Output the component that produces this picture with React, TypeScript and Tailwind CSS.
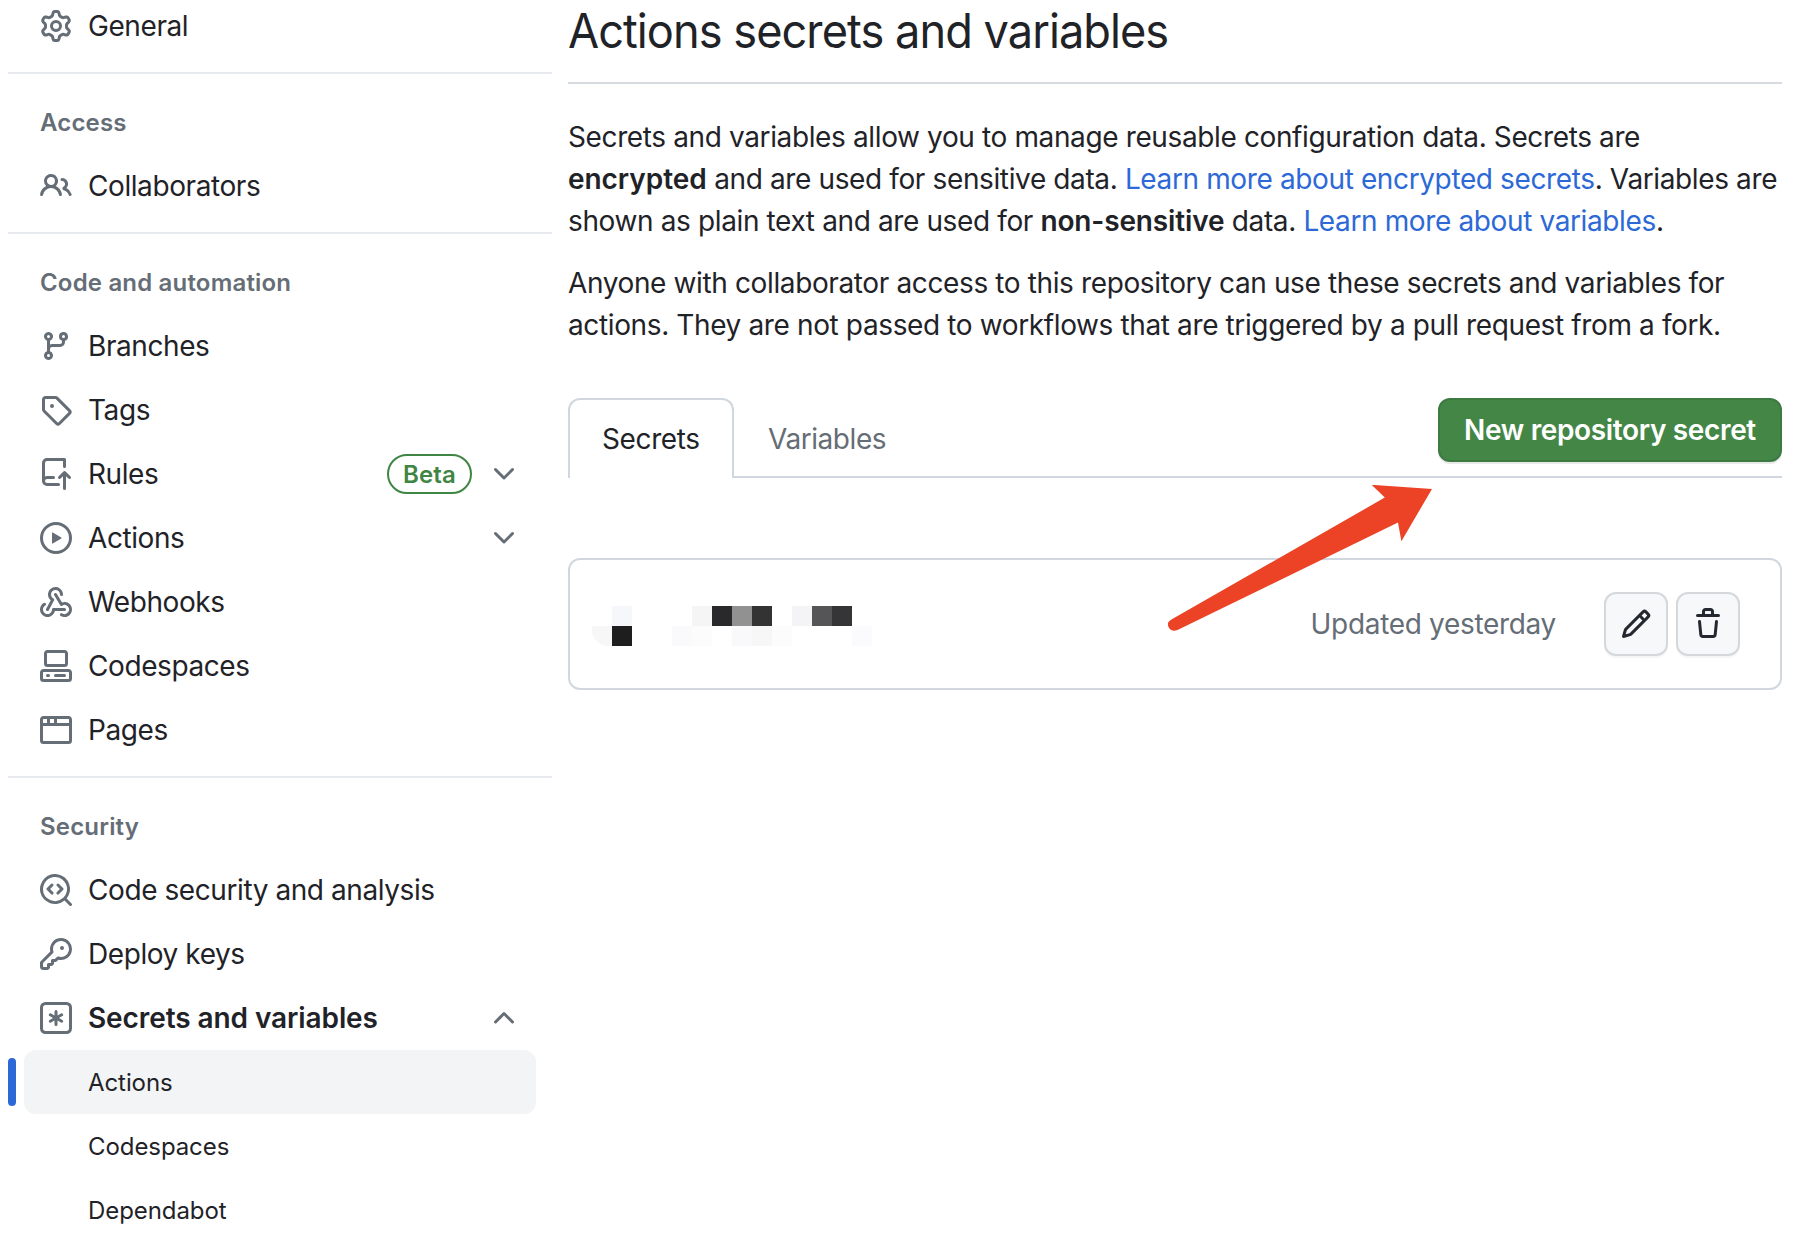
import type { ReactNode } from 'react';

const ICONS = {
  gear: 'M8 0a8.2 8.2 0 0 1 .701.031C9.444.095 9.99.645 10.16 1.29l.288 1.107c.018.066.079.158.212.224.231.114.454.243.668.386.123.082.233.09.299.071l1.103-.303c.644-.176 1.392.021 1.82.63.27.385.506.792.704 1.218.315.675.111 1.422-.364 1.891l-.814.806c-.049.048-.098.147-.088.294.016.257.016.515 0 .772-.01.147.038.246.088.294l.814.806c.475.469.679 1.216.364 1.891a7.977 7.977 0 0 1-.704 1.217c-.428.61-1.176.807-1.82.63l-1.102-.302c-.067-.019-.177-.011-.3.071a5.909 5.909 0 0 1-.668.386c-.133.066-.194.158-.211.224l-.29 1.106c-.168.646-.715 1.196-1.458 1.26a8.006 8.006 0 0 1-1.402 0c-.743-.064-1.289-.614-1.458-1.26l-.289-1.106c-.018-.066-.079-.158-.212-.224a5.738 5.738 0 0 1-.668-.386c-.123-.082-.233-.09-.299-.071l-1.103.303c-.644.176-1.392-.021-1.82-.63a8.12 8.12 0 0 1-.704-1.218c-.315-.675-.111-1.422.363-1.891l.815-.806c.05-.048.098-.147.088-.294a6.214 6.214 0 0 1 0-.772c.01-.147-.038-.246-.088-.294l-.815-.806C.635 6.045.431 5.298.746 4.623a7.92 7.92 0 0 1 .704-1.217c.428-.61 1.176-.807 1.82-.63l1.102.302c.067.019.177.011.3-.071.214-.143.437-.272.668-.386.133-.066.194-.158.211-.224l.29-1.106C6.009.645 6.556.095 7.299.03 7.53.01 7.764 0 8 0Zm-.571 1.525c-.036.003-.108.036-.137.146l-.289 1.105c-.147.561-.549.967-.998 1.189-.173.086-.34.183-.5.29-.417.278-.97.423-1.529.27l-1.103-.303c-.109-.03-.175.016-.195.045-.22.312-.412.644-.573.99-.014.031-.021.11.059.19l.815.806c.411.406.562.957.53 1.456a4.709 4.709 0 0 0 0 .582c.032.499-.119 1.05-.53 1.456l-.815.806c-.081.08-.073.159-.059.19.162.346.353.677.573.989.02.03.085.076.195.046l1.102-.303c.56-.153 1.113-.008 1.53.27.161.107.328.204.501.29.447.222.85.629.997 1.189l.289 1.105c.029.109.101.143.137.146a6.6 6.6 0 0 0 1.142 0c.036-.003.108-.036.137-.146l.289-1.105c.147-.561.549-.967.998-1.189.173-.086.34-.183.5-.29.417-.278.97-.423 1.529-.27l1.103.303c.109.029.175-.016.195-.045.22-.313.411-.644.573-.99.014-.031.021-.11-.059-.19l-.815-.806c-.411-.406-.562-.957-.53-1.456a4.709 4.709 0 0 0 0-.582c-.032-.499.119-1.05.53-1.456l.815-.806c.081-.08.073-.159.059-.19a6.464 6.464 0 0 0-.573-.989c-.02-.03-.085-.076-.195-.046l-1.102.303c-.56.153-1.113.008-1.53-.27a4.44 4.44 0 0 0-.501-.29c-.447-.222-.85-.629-.997-1.189l-.289-1.105c-.029-.11-.101-.143-.137-.146a6.6 6.6 0 0 0-1.142 0ZM11 8a3 3 0 1 1-6 0 3 3 0 0 1 6 0ZM9.5 8a1.5 1.5 0 1 0-3.001.001A1.5 1.5 0 0 0 9.5 8Z',
  people: 'M2 5.5a3.5 3.5 0 1 1 5.898 2.549 5.508 5.508 0 0 1 3.034 4.084.75.75 0 1 1-1.482.235 4 4 0 0 0-7.9 0 .75.75 0 0 1-1.482-.236A5.507 5.507 0 0 1 3.102 8.05 3.493 3.493 0 0 1 2 5.5ZM11 4a3.001 3.001 0 0 1 2.22 5.018 5.01 5.01 0 0 1 2.56 3.012.749.749 0 0 1-.885.954.752.752 0 0 1-.549-.514 3.507 3.507 0 0 0-2.522-2.372.75.75 0 0 1-.574-.73v-.352a.75.75 0 0 1 .416-.672A1.5 1.5 0 0 0 11 5.5.75.75 0 0 1 11 4Zm-5.5-.5a2 2 0 1 0-.001 3.999A2 2 0 0 0 5.5 3.5Z',
  branch: 'M9.5 3.25a2.25 2.25 0 1 1 3 2.122V6A2.5 2.5 0 0 1 10 8.5H6a1 1 0 0 0-1 1v1.128a2.251 2.251 0 1 1-1.5 0V5.372a2.25 2.25 0 1 1 1.5 0v1.836A2.493 2.493 0 0 1 6 7h4a1 1 0 0 0 1-1v-.628A2.25 2.25 0 0 1 9.5 3.25Zm-6 0a.75.75 0 1 0 1.5 0 .75.75 0 0 0-1.5 0Zm8.25-.75a.75.75 0 1 0 0 1.5.75.75 0 0 0 0-1.5ZM4.25 12a.75.75 0 1 0 0 1.5.75.75 0 0 0 0-1.5Z',
  tag: 'M1 7.775V2.75C1 1.784 1.784 1 2.75 1h5.025c.464 0 .91.184 1.238.513l6.25 6.25a1.75 1.75 0 0 1 0 2.474l-5.026 5.026a1.75 1.75 0 0 1-2.474 0l-6.25-6.25A1.752 1.752 0 0 1 1 7.775Zm1.5 0c0 .066.026.13.073.177l6.25 6.25a.25.25 0 0 0 .354 0l5.025-5.025a.25.25 0 0 0 0-.354l-6.25-6.25a.25.25 0 0 0-.177-.073H2.75a.25.25 0 0 0-.25.25ZM6 5a1 1 0 1 1 0 2 1 1 0 0 1 0-2Z',
  repoPush: 'M1 2.5A2.5 2.5 0 0 1 3.5 0h8.75a.75.75 0 0 1 .75.75v3.5a.75.75 0 0 1-1.5 0V1.5h-8a1 1 0 0 0-1 1v6.708A2.493 2.493 0 0 1 3.5 9h3.25a.75.75 0 0 1 0 1.5H3.5a1 1 0 0 0 0 2h5.75a.75.75 0 0 1 0 1.5H3.5A2.5 2.5 0 0 1 1 11.5Zm13.23 7.79h-.001l-1.224-1.224v6.184a.75.75 0 0 1-1.5 0V9.066L10.28 10.29a.75.75 0 0 1-1.06-1.061l2.505-2.504a.75.75 0 0 1 1.06 0L15.29 9.23a.751.751 0 0 1-.018 1.042.751.751 0 0 1-1.042.018Z',
  play: 'M8 0a8 8 0 1 1 0 16A8 8 0 0 1 8 0ZM1.5 8a6.5 6.5 0 1 0 13 0 6.5 6.5 0 0 0-13 0Zm4.879-2.773 4.264 2.559a.25.25 0 0 1 0 .428l-4.264 2.559A.25.25 0 0 1 6 10.559V5.442a.25.25 0 0 1 .379-.215Z',
  webhook: 'M5.5 4.25a2.25 2.25 0 0 1 4.5 0 .75.75 0 0 0 1.5 0 3.75 3.75 0 1 0-6.14 2.889l-2.272 4.258a.75.75 0 0 0 1.324.706L7 7.25a.75.75 0 0 0-.309-1.015A2.25 2.25 0 0 1 5.5 4.25ZM7.364 3.607a.75.75 0 0 1 1.03.257l2.608 4.349a3.75 3.75 0 1 1-.628 6.785.75.75 0 0 1 .752-1.299 2.25 2.25 0 1 0-.033-3.88.75.75 0 0 1-1.03-.256L7.107 4.636a.75.75 0 0 1 .257-1.03ZM2.9 8.776A.75.75 0 0 1 2.625 9.8 2.25 2.25 0 1 0 6 11.75a.75.75 0 0 1 .75-.751h5.5a.75.75 0 0 1 0 1.5H7.425a3.751 3.751 0 1 1-5.55-3.998.75.75 0 0 1 1.024.274Z',
  codespaces: 'M0 11.25c0-.966.784-1.75 1.75-1.75h12.5c.966 0 1.75.784 1.75 1.75v3A1.75 1.75 0 0 1 14.25 16H1.75A1.75 1.75 0 0 1 0 14.25Zm2-9.5C2 .784 2.784 0 3.75 0h8.5C13.216 0 14 .784 14 1.75v5a1.75 1.75 0 0 1-1.75 1.75h-8.5A1.75 1.75 0 0 1 2 6.75Zm1.75-.25a.25.25 0 0 0-.25.25v5c0 .138.112.25.25.25h8.5a.25.25 0 0 0 .25-.25v-5a.25.25 0 0 0-.25-.25Zm-2 9.5a.25.25 0 0 0-.25.25v3c0 .138.112.25.25.25h12.5a.25.25 0 0 0 .25-.25v-3a.25.25 0 0 0-.25-.25ZM7 12.75a.75.75 0 0 1 .75-.75h4.5a.75.75 0 0 1 0 1.5h-4.5a.75.75 0 0 1-.75-.75Zm-4 0a.75.75 0 0 1 .75-.75h.5a.75.75 0 0 1 0 1.5h-.5a.75.75 0 0 1-.75-.75Z',
  browser: 'M0 2.75C0 1.784.784 1 1.75 1h12.5c.966 0 1.75.784 1.75 1.75v10.5A1.75 1.75 0 0 1 14.25 15H1.75A1.75 1.75 0 0 1 0 13.25ZM14.5 6h-13v7.25c0 .138.112.25.25.25h12.5a.25.25 0 0 0 .25-.25Zm-6-3.5v2h6V2.75a.25.25 0 0 0-.25-.25ZM5 2.5v2h2v-2Zm-3.25 0a.25.25 0 0 0-.25.25V4.5h2v-2Z',
  codescan: 'M8.47 4.97a.75.75 0 0 0 0 1.06L9.94 7.5 8.47 8.97a.75.75 0 1 0 1.06 1.06l2-2a.75.75 0 0 0 0-1.06l-2-2a.75.75 0 0 0-1.06 0ZM6.53 6.03a.75.75 0 0 0-1.06-1.06l-2 2a.75.75 0 0 0 0 1.06l2 2a.75.75 0 1 0 1.06-1.06L5.06 7.5l1.47-1.47ZM12.246 13.307a7.501 7.501 0 1 1 1.06-1.06l2.474 2.473a.749.749 0 1 1-1.06 1.06l-2.474-2.473ZM1.5 7.5a6.002 6.002 0 0 0 3.608 5.504 6.002 6.002 0 0 0 6.486-1.117.748.748 0 0 1 .292-.293A6 6 0 1 0 1.5 7.5Z',
  key: 'M10.5 0a5.499 5.499 0 1 1-1.288 10.848l-.932.932a.749.749 0 0 1-.53.22H7v.75a.749.749 0 0 1-.22.53l-.5.5a.749.749 0 0 1-.53.22H5v.75a.749.749 0 0 1-.22.53l-.5.5a.749.749 0 0 1-.53.22h-2A1.75 1.75 0 0 1 0 14.25v-2c0-.199.079-.389.22-.53l4.932-4.932A5.5 5.5 0 0 1 10.5 0Zm-4 5.5c-.001.431.069.86.205 1.269a.75.75 0 0 1-.181.768L1.5 12.56v1.69c0 .138.112.25.25.25h1.69l.06-.06v-1.19a.75.75 0 0 1 .75-.75h1.19l.06-.06v-1.19a.75.75 0 0 1 .75-.75h1.19l1.023-1.025a.75.75 0 0 1 .768-.18A4 4 0 1 0 6.5 5.5ZM11 6a1 1 0 1 1 0-2 1 1 0 0 1 0 2Z',
  keyAsterisk: 'M0 2.75A2.75 2.75 0 0 1 2.75 0h10.5A2.75 2.75 0 0 1 16 2.75v10.5A2.75 2.75 0 0 1 13.25 16H2.75A2.75 2.75 0 0 1 0 13.25ZM2.75 1.5c-.69 0-1.25.56-1.25 1.25v10.5c0 .69.56 1.25 1.25 1.25h10.5c.69 0 1.25-.56 1.25-1.25V2.75c0-.69-.56-1.25-1.25-1.25ZM8 4a.75.75 0 0 1 .75.75V6.7l1.69-.975a.75.75 0 0 1 .75 1.3L9.5 8l1.69.976a.75.75 0 0 1-.75 1.298L8.75 9.3v1.951a.75.75 0 0 1-1.5 0V9.299l-1.69.976a.75.75 0 0 1-.75-1.3L6.5 8l-1.69-.975a.75.75 0 0 1 .75-1.3l1.69.976V4.75A.75.75 0 0 1 8 4Z',
  pencil: 'M11.013 1.427a1.75 1.75 0 0 1 2.474 0l1.086 1.086a1.75 1.75 0 0 1 0 2.474l-8.61 8.61c-.21.21-.47.364-.756.445l-3.251.93a.75.75 0 0 1-.927-.928l.929-3.25c.081-.286.235-.547.445-.758l8.61-8.61Zm.176 4.823L9.75 4.81l-6.286 6.287a.253.253 0 0 0-.064.108l-.558 1.953 1.953-.558a.253.253 0 0 0 .108-.064Zm1.238-3.763a.25.25 0 0 0-.354 0L10.811 3.75l1.439 1.44 1.263-1.263a.25.25 0 0 0 0-.354Z',
  trash: 'M11 1.75V3h2.25a.75.75 0 0 1 0 1.5H2.75a.75.75 0 0 1 0-1.5H5V1.75C5 .784 5.784 0 6.75 0h2.5C10.216 0 11 .784 11 1.75ZM4.496 6.675l.66 6.6a.25.25 0 0 0 .249.225h5.19a.25.25 0 0 0 .249-.225l.66-6.6a.75.75 0 0 1 1.492.149l-.66 6.6A1.748 1.748 0 0 1 10.595 15h-5.19a1.75 1.75 0 0 1-1.741-1.575l-.66-6.6a.75.75 0 1 1 1.492-.15ZM6.5 1.75V3h3V1.75a.25.25 0 0 0-.25-.25h-2.5a.25.25 0 0 0-.25.25Z',
  chevronDown: 'M12.78 5.22a.749.749 0 0 1 0 1.06l-4.25 4.25a.749.749 0 0 1-1.06 0L3.22 6.28a.749.749 0 1 1 1.06-1.06L8 8.939l3.72-3.719a.749.749 0 0 1 1.06 0Z',
  chevronUp: 'M3.22 10.53a.749.749 0 0 1 0-1.06l4.25-4.25a.749.749 0 0 1 1.06 0l4.25 4.25a.749.749 0 1 1-1.06 1.06L8 6.811 4.28 10.53a.749.749 0 0 1-1.06 0Z',
};

type IconName = keyof typeof ICONS;

function Icon({ name, className = 'text-[#656d76]' }: { name: IconName; className?: string }) {
  return (
    <svg viewBox="0 0 16 16" className={`size-8 shrink-0 fill-current ${className}`} aria-hidden="true">
      <path d={ICONS[name]} />
    </svg>
  );
}

function NavItem({ icon, label, bold, badge, chevron }: { icon: IconName; label: string; bold?: boolean; badge?: string; chevron?: IconName }) {
  return (
    <li className="flex h-16 items-center px-4">
      <Icon name={icon} />
      <span className={`ml-4 flex-1 ${bold ? 'font-semibold tracking-[-0.09px]' : 'tracking-[-0.42px]'}`}>{label}</span>
      {badge && (
        <span className="flex h-10 w-[85px] items-center justify-center rounded-full border-2 border-[#3f8544] pt-px text-[24px] font-semibold tracking-[0.1px] text-[#3f8544]">
          {badge}
        </span>
      )}
      {chevron && <span className="ml-4 flex"><Icon name={chevron} /></span>}
    </li>
  );
}

function SubItem({ label, active }: { label: string; active?: boolean }) {
  return (
    <li className={`relative flex h-16 items-center rounded-xl pt-0.5 pl-16 text-[24px] tracking-[-0.08px] ${active ? 'bg-[#f3f4f6]' : ''}`}>
      {active && <span className="absolute top-2 -left-4 h-12 w-2 rounded-[6px] bg-[#2d69d6]" />}
      {label}
    </li>
  );
}

function Section({ title, children }: { title: string; children: ReactNode }) {
  return (
    <section className="mt-3.5 border-t-2 border-[#e6eaee]">
      <h2 className="flex h-20 items-center pt-[18px] pl-8 text-[24px] leading-9 font-semibold tracking-[0.18px] text-[#656d76]">{title}</h2>
      <ul className="px-4">{children}</ul>
    </section>
  );
}

const MOSAIC = [
  ['', '#f6f7fa', '', '', '', '#f5f5f5', '#29292b', '#919192', '#333333', '', '#f4f4f6', '#555557', '#353537', ''],
  ['#f7f7f7', '#1e1e1e', '', '', '#fafafc', '#fcfcfc', '', '#f9f9fb', '#f7f7f7', '#fcfcfc', '', '', '', '#fbfbfd'],
];

function RedactedName() {
  return (
    <div className="mt-1 grid grid-cols-[repeat(14,20px)] grid-rows-[20px_20px]">
      {MOSAIC.flat().map((color, i) => (
        <span key={i} className={i === 14 ? 'rounded-bl-[16px]' : ''} style={{ backgroundColor: color || 'transparent' }} />
      ))}
    </div>
  );
}

export default function App() {
  return (
    <div className="relative flex h-[1234px] w-[1808px] overflow-hidden bg-white font-['Inter',sans-serif] text-[28px] leading-[42px] tracking-[-0.375px] text-[#1f2328]">
      <nav className="ml-2 w-[544px] shrink-0">
        <ul className="-mt-1.5 px-4">
          <NavItem icon="gear" label="General" />
        </ul>
        <Section title="Access">
          <NavItem icon="people" label="Collaborators" />
        </Section>
        <Section title="Code and automation">
          <NavItem icon="branch" label="Branches" />
          <NavItem icon="tag" label="Tags" />
          <NavItem icon="repoPush" label="Rules" badge="Beta" chevron="chevronDown" />
          <NavItem icon="play" label="Actions" chevron="chevronDown" />
          <NavItem icon="webhook" label="Webhooks" />
          <NavItem icon="codespaces" label="Codespaces" />
          <NavItem icon="browser" label="Pages" />
        </Section>
        <Section title="Security">
          <NavItem icon="codescan" label="Code security and analysis" />
          <NavItem icon="key" label="Deploy keys" />
          <NavItem icon="keyAsterisk" label="Secrets and variables" bold chevron="chevronUp" />
          <SubItem label="Actions" active />
          <SubItem label="Codespaces" />
          <SubItem label="Dependabot" />
        </Section>
      </nav>

      <main className="ml-4 w-[1214px] shrink-0">
        <h1 className="h-[84px] border-b-2 border-[#d5dbe1] text-[48px] leading-[62px]">
          <span className="inline-block origin-left scale-x-[0.94] tracking-[-1px]">Actions secrets and variables</span>
        </h1>
        <p className="mt-8 whitespace-nowrap">
          Secrets and variables allow you to manage reusable configuration data. Secrets are<br />
          <strong className="font-semibold tracking-[-0.05px]">encrypted</strong> and are used for sensitive data. <a className="text-[#2d69d6]">Learn more about encrypted secrets</a>. Variables are<br />
          shown as plain text and are used for <strong className="font-semibold tracking-[-0.15px]">non-sensitive</strong> data. <a className="text-[#2d69d6]">Learn more about variables</a>.
        </p>
        <p className="mt-5 whitespace-nowrap">
          Anyone with collaborator access to this repository can use these secrets and variables for<br />
          actions. They are not passed to workflows that are triggered by a pull request from a fork.
        </p>

        <div className="mt-[52px] flex h-20 items-start border-b-2 border-[#d0d7de]">
          <div className="flex h-20 w-[166px] items-center rounded-t-xl border-2 border-b-0 border-[#d0d7de] bg-white pl-8">Secrets</div>
          <div className="flex h-20 items-center pt-0.5 pl-[34px] tracking-[-0.45px] text-[#656d76]">Variables</div>
          <button className="ml-auto flex h-16 w-[344px] items-center justify-center rounded-xl border-2 border-[#3c7a42] bg-[#438646] font-semibold tracking-[-0.35px] text-white shadow-[0_2px_0_rgba(31,35,40,0.1)]">
            New repository secret
          </button>
        </div>

        <div className="mt-20 flex h-[132px] items-center rounded-xl border-2 border-[#d0d7de] pl-[22px]">
          <RedactedName />
          <span className="ml-auto tracking-[-0.32px] text-[#656d76]">Updated yesterday</span>
          <div className="mr-10 ml-12 flex gap-2">
            <button className="flex size-16 items-center justify-center rounded-xl border-2 border-[#d5d8da] bg-[#f6f8fa] shadow-[0_2px_0_rgba(31,35,40,0.04)]">
              <Icon name="pencil" className="text-[#24292f]" />
            </button>
            <button className="flex size-16 items-center justify-center rounded-xl border-2 border-[#d5d8da] bg-[#f6f8fa] shadow-[0_2px_0_rgba(31,35,40,0.04)]">
              <Icon name="trash" className="text-[#24292f]" />
            </button>
          </div>
        </div>
      </main>

      <svg viewBox="0 0 264 146" className="absolute top-[485px] left-[1168px] h-[146px] w-[264px] fill-[#ec4226]" aria-hidden="true">
        <path d="M264 4 203.6-.2 216.8 12.6 3.4 134.5C-.6 137-1.2 139.5 1.5 143.5 3.5 146 6.5 146.3 9.5 144.9L230 37.6l3.4 18.6Z" />
      </svg>
    </div>
  );
}
